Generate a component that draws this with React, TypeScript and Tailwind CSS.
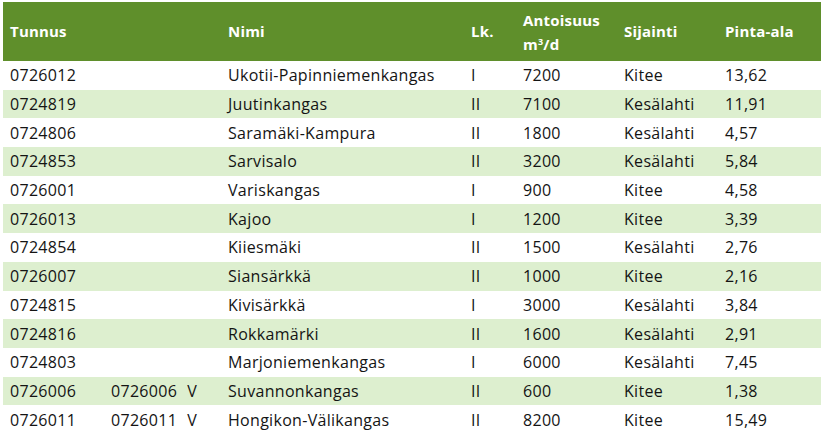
import React from 'react';

type Row = {
  tunnus: string;
  alt?: string;
  nimi: string;
  lk: string;
  antoisuus: string;
  sijainti: string;
  ala: string;
};

const rows: Row[] = [
  { tunnus: '0726012', nimi: 'Ukotii-Papinniemenkangas', lk: 'I', antoisuus: '7200', sijainti: 'Kitee', ala: '13,62' },
  { tunnus: '0724819', nimi: 'Juutinkangas', lk: 'II', antoisuus: '7100', sijainti: 'Kesälahti', ala: '11,91' },
  { tunnus: '0724806', nimi: 'Saramäki-Kampura', lk: 'II', antoisuus: '1800', sijainti: 'Kesälahti', ala: '4,57' },
  { tunnus: '0724853', nimi: 'Sarvisalo', lk: 'II', antoisuus: '3200', sijainti: 'Kesälahti', ala: '5,84' },
  { tunnus: '0726001', nimi: 'Variskangas', lk: 'I', antoisuus: '900', sijainti: 'Kitee', ala: '4,58' },
  { tunnus: '0726013', nimi: 'Kajoo', lk: 'I', antoisuus: '1200', sijainti: 'Kitee', ala: '3,39' },
  { tunnus: '0724854', nimi: 'Kiiesmäki', lk: 'II', antoisuus: '1500', sijainti: 'Kesälahti', ala: '2,76' },
  { tunnus: '0726007', nimi: 'Siansärkkä', lk: 'II', antoisuus: '1000', sijainti: 'Kitee', ala: '2,16' },
  { tunnus: '0724815', nimi: 'Kivisärkkä', lk: 'I', antoisuus: '3000', sijainti: 'Kesälahti', ala: '3,84' },
  { tunnus: '0724816', nimi: 'Rokkamärki', lk: 'II', antoisuus: '1600', sijainti: 'Kesälahti', ala: '2,91' },
  { tunnus: '0724803', nimi: 'Marjoniemenkangas', lk: 'I', antoisuus: '6000', sijainti: 'Kesälahti', ala: '7,45' },
  { tunnus: '0726006', alt: '0726006', nimi: 'Suvannonkangas', lk: 'II', antoisuus: '600', sijainti: 'Kitee', ala: '1,38' },
  { tunnus: '0726011', alt: '0726011', nimi: 'Hongikon-Välikangas', lk: 'II', antoisuus: '8200', sijainti: 'Kitee', ala: '15,49' },
];

const cols = 'grid grid-cols-[101px_117px_243px_52px_101px_101px_1fr]';

export default function App() {
  return (
    <div className="h-[430px] w-[821px] overflow-hidden bg-white pl-[3px] pt-[2px] font-['Open_Sans','Lato',sans-serif] text-[16px] tracking-[0.3px] text-[#141414]">
      <div className={`${cols} h-[59px] items-center bg-[#5f8f2b] text-[15px] font-bold tracking-[0.2px] text-white`}>
        <div className="pl-[7px]">Tunnus</div>
        <div />
        <div className="pl-[7px]">Nimi</div>
        <div className="pl-[7px]">Lk.</div>
        <div className="pl-[7px] leading-[24px]">
          Antoisuus
          <br />
          m<sup className="text-[9px]">3</sup>/d
        </div>
        <div className="pl-[7px]">Sijainti</div>
        <div className="pl-[7px]">Pinta-ala</div>
      </div>
      {rows.map((r, i) => (
        <div
          key={r.tunnus}
          className={`${cols} h-[28.7px] items-center ${i % 2 === 1 ? 'bg-[#ddefcf]' : 'bg-white'}`}
        >
          <div className="pl-[7px]">{r.tunnus}</div>
          <div className="flex gap-[10px] pl-[7px]">
            {r.alt && (
              <>
                <span>{r.alt}</span>
                <span>V</span>
              </>
            )}
          </div>
          <div className="pl-[7px]">{r.nimi}</div>
          <div className="pl-[7px]">{r.lk}</div>
          <div className="pl-[7px]">{r.antoisuus}</div>
          <div className="pl-[7px]">{r.sijainti}</div>
          <div className="pl-[7px]">{r.ala}</div>
        </div>
      ))}
    </div>
  );
}
